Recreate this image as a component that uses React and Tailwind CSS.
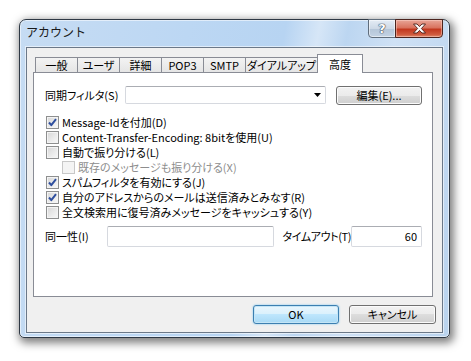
import React from 'react';

const tabs = ['一般', 'ユーザ', '詳細', 'POP3', 'SMTP', 'ダイアルアップ'];
const tabWidths = ['w-[43px]', 'w-[43px]', 'w-[43px]', 'w-[43px]', 'w-[43px]', 'w-[73px]'];

const options = [
  { label: 'Message-Idを付加(D)', checked: true },
  { label: 'Content-Transfer-Encoding: 8bitを使用(U)', checked: false },
  { label: '自動で振り分ける(L)', checked: false },
  { label: '既存のメッセージも振り分ける(X)', checked: false, indent: true, disabled: true },
  { label: 'スパムフィルタを有効にする(J)', checked: true },
  { label: '自分のアドレスからのメールは送信済みとみなす(R)', checked: true },
  { label: '全文検索用に復号済みメッセージをキャッシュする(Y)', checked: false },
];

const CheckBox = ({ checked, disabled }) => (
  <div
    className={`w-[13px] h-[13px] border shrink-0 flex items-center justify-center ${
      disabled
        ? 'border-[#c8c8c8] bg-[#f4f4f4]'
        : 'border-[#8e8f8f] bg-[linear-gradient(135deg,#d6d6d6_0%,#ececec_60%,#f8f8f8_100%)] shadow-[inset_0_0_0_1px_#f4f4f4]'
    }`}
  >
    {checked && (
      <svg width="11" height="11" viewBox="0 0 11 11">
        <path d="M2 5.5 L4.3 8.2 L9 2.2" fill="none" stroke="#2f4f9e" strokeWidth="2" strokeLinejoin="round" />
      </svg>
    )}
  </div>
);

const Button = ({ children, primary, width }) => (
  <div
    className={`${width} h-[19px] rounded-[3px] border flex items-center justify-center leading-none whitespace-nowrap ${
      primary
        ? 'border-[#3c7fb1] bg-[linear-gradient(to_bottom,#eaf6fd_0%,#d9f0fc_50%,#bee6fd_50%,#a7d9f5_100%)] shadow-[inset_0_0_0_1px_#c4e5f6,0_0_2px_#6ec3ef]'
        : 'border-[#707070] bg-[linear-gradient(to_bottom,#f2f2f2_0%,#ebebeb_50%,#dddddd_50%,#cfcfcf_100%)] shadow-[inset_0_0_0_1px_#fbfbfb]'
    }`}
  >
    {children}
  </div>
);

export default function App() {
  return (
    <div className="w-[471px] h-[361px] bg-white pl-[19px] pt-[19px] font-['Noto_Sans_CJK_JP',sans-serif] text-[11px] text-black [font-feature-settings:'palt']">
      <div className="w-[431px] h-[319px] rounded-t-[7px] rounded-b-[5px] border border-[#2e3844] bg-[linear-gradient(100deg,#c6dcf3_0%,#bcd7f3_35%,#b7d4f2_55%,#d6e6f7_62%,#bcd6f1_68%,#cfe1f5_78%,#b9d3ee_100%)] shadow-[2px_3px_9px_2px_rgba(0,0,0,0.5),inset_0_0_0_1px_rgba(255,255,255,0.55)] flex flex-col">
        {/* title bar */}
        <div className="h-[27px] flex items-start">
          <div className="pl-[6px] pt-[5px] leading-[14px] text-[12px] text-[#1a1a1a] [font-feature-settings:normal]">アカウント</div>
          <div className="ml-auto mr-[6px] -mt-px flex">
            <div className="w-[28px] h-[19px] rounded-bl-[4px] border border-[#5f6d7c] bg-[linear-gradient(to_bottom,#e4ecf5_0%,#cdd9e6_50%,#b4c5d8_50%,#c3d3e4_100%)] shadow-[inset_0_0_0_1px_rgba(255,255,255,0.5)] flex items-center justify-center">
              <span className="font-['DejaVu_Sans',sans-serif] font-bold text-[13px] leading-none text-white [text-shadow:0_0_1px_#2b3a4c,0_0_1px_#2b3a4c,0_0_1px_#2b3a4c]">?</span>
            </div>
            <div className="-ml-px w-[48px] h-[19px] rounded-br-[4px] border border-[#4b241e] bg-[linear-gradient(to_bottom,#e8a597_0%,#d9735f_45%,#c2381f_55%,#cf5a3e_85%,#e08a6c_100%)] shadow-[inset_0_0_0_1px_rgba(255,220,210,0.45)] flex items-center justify-center">
              <svg width="15" height="11" viewBox="0 0 15 11">
                <path
                  d="M1.5 1 H5 L7.5 3.6 L10 1 H13.5 L9.4 5.5 L13.5 10 H10 L7.5 7.4 L5 10 H1.5 L5.6 5.5 Z"
                  fill="#ffffff"
                  stroke="#4a1f18"
                  strokeWidth="0.9"
                  strokeLinejoin="round"
                />
              </svg>
            </div>
          </div>
        </div>

        {/* client area */}
        <div className="mx-[6px] h-[286px] border border-[#6b7888] bg-[#f0f0f0] shadow-[0_0_0_1px_rgba(255,255,255,0.55)] flex flex-col">
          <div className="pt-[6px] pl-[6px]">
            {/* tabs */}
            <div className="h-[18px] flex items-end pl-[2px]">
              {tabs.map((t, i) => (
                <div
                  key={t}
                  className={`${tabWidths[i]} ${i > 0 ? '-ml-px' : ''} h-[15px] border border-b-0 border-[#898c95] bg-[linear-gradient(to_bottom,#f3f3f3,#e5e5e5)] flex items-center justify-center leading-none pt-px whitespace-nowrap`}
                >
                  {t}
                </div>
              ))}
              <div className="relative z-10 -ml-px -mb-px w-[46px] h-[19px] border border-b-0 border-[#898c95] bg-white flex justify-center pt-[2px] leading-[14px]">
                高度
              </div>
            </div>

            {/* tab panel */}
            <div className="w-[400px] h-[225px] border border-[#898c95] bg-white pl-[11px] pr-[10px] pt-[13px]">
              <div className="flex items-center h-[18px]">
                <div className="w-[80px] leading-none whitespace-nowrap">同期フィルタ(S)</div>
                <div className="w-[202px] h-[18px] rounded-[2px] border border-[#d6d9df] border-t-[#abadb3] bg-white flex items-center justify-end pr-[4px]">
                  <svg width="7" height="4" viewBox="0 0 7 4">
                    <path d="M0 0 H7 L3.5 4 Z" fill="#000" />
                  </svg>
                </div>
                <div className="ml-[10px]">
                  <Button width="w-[86px]">編集(E)...</Button>
                </div>
              </div>

              <div className="mt-[11px] flex flex-col">
                {options.map((o) => (
                  <div key={o.label} className={`h-[15px] flex items-center ${o.indent ? 'pl-[17px]' : 'pl-px'}`}>
                    <CheckBox checked={o.checked} disabled={o.disabled} />
                    <span className={`ml-[3px] leading-none whitespace-nowrap ${o.disabled ? 'text-[#8d8d8d]' : ''}`}>{o.label}</span>
                  </div>
                ))}
              </div>

              <div className="mt-[6px] flex items-center h-[21px]">
                <div className="w-[62px] leading-none whitespace-nowrap">同一性(I)</div>
                <div className="w-[167px] h-[21px] rounded-[2px] border border-[#d6d9df] border-t-[#abadb3] bg-white" />
                <div className="ml-[9px] leading-none whitespace-nowrap tracking-[-0.4px]">タイムアウト(T)</div>
                <div className="ml-auto w-[71px] shrink-0 h-[21px] rounded-[2px] border border-[#d6d9df] border-t-[#abadb3] bg-white flex items-center justify-end pr-[4px] leading-none">
                  60
                </div>
              </div>
            </div>
          </div>

          {/* bottom buttons */}
          <div className="mt-[8px] flex justify-end gap-[10px] pr-[6px]">
            <Button primary width="w-[86px]">OK</Button>
            <Button width="w-[87px]">キャンセル</Button>
          </div>
        </div>
      </div>
    </div>
  );
}
